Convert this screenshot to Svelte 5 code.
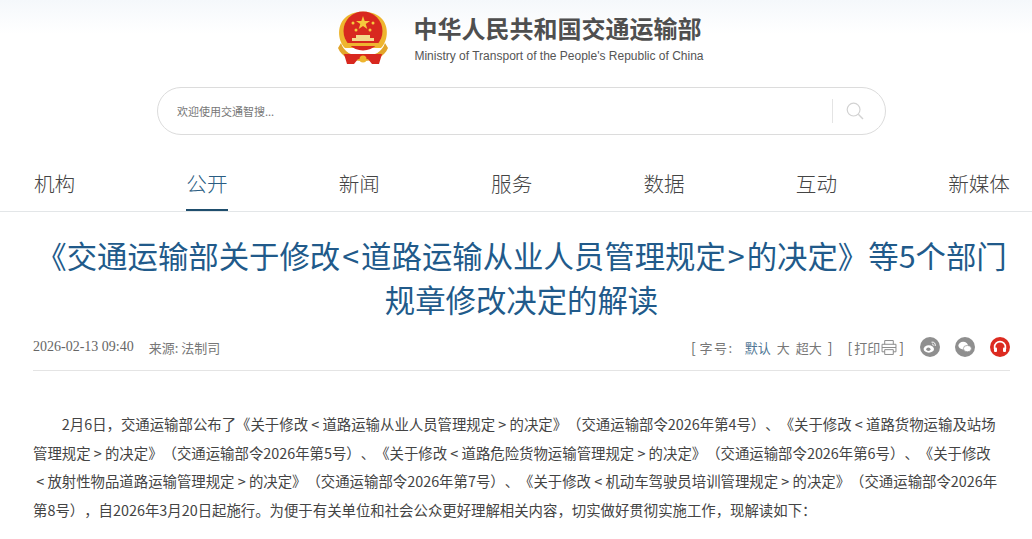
<script>
  const nav = [
    { label: '机构' }, { label: '公开', active: true }, { label: '新闻' }, { label: '服务' },
    { label: '数据' }, { label: '互动' }, { label: '新媒体' }
  ];
</script>

<div class="page">
  <header class="brand">
    <svg class="emblem" viewBox="0 0 54 56" aria-hidden="true">
      <path d="M9 38 C1 30 1 14 10 7 C18 0 36 0 44 7 C53 14 53 30 45 38 Z" fill="#eeb52f"/>
      <circle cx="27" cy="21" r="19.5" fill="#d8281f"/>
      <polygon points="27,6 28.7,11 34,11 29.7,14.1 31.3,19 27,16 22.7,19 24.3,14.1 20,11 25.3,11" fill="#f5c93d"/>
      <circle cx="17" cy="13" r="1.5" fill="#f5c93d"/><circle cx="37" cy="13" r="1.5" fill="#f5c93d"/>
      <circle cx="20" cy="20" r="1.5" fill="#f5c93d"/><circle cx="34" cy="20" r="1.5" fill="#f5c93d"/>
      <path d="M16 31 V28 H20 V25 H34 V28 H38 V31 Z" fill="#f3d98b"/>
      <path d="M12 33 H42 V36 H12 Z" fill="#eeb52f"/>
      <path d="M5 33 C8 42 15 46 27 46 C39 46 46 42 49 33 L52 38 C48 47 40 51 27 51 C14 51 6 47 2 38 Z" fill="#e2a52a"/>
      <path d="M8 44 H46 L43 54 H36 L32 49 H22 L18 54 H11 Z" fill="#d8281f"/>
      <circle cx="27" cy="49" r="3.5" fill="#eeb52f"/>
    </svg>
    <div class="brand-text">
      <div class="cn">中华人民共和国交通运输部</div>
      <div class="en">Ministry of Transport of the People's Republic of China</div>
    </div>
  </header>

  <div class="search">
    <span class="placeholder">欢迎使用交通智搜...</span>
    <span class="divider"></span>
    <svg class="glass" viewBox="0 0 18 18" aria-hidden="true">
      <circle cx="7.6" cy="7.6" r="6.4" fill="none" stroke="#d2d2d2" stroke-width="1.2"/>
      <path d="M12.3 12.3 L17 17" stroke="#d2d2d2" stroke-width="1.4" fill="none"/>
    </svg>
  </div>

  <nav class="nav">
    {#each nav as item}
      <a class="nav-item" class:active={item.active} href="#top">{item.label}</a>
    {/each}
  </nav>

  <main class="article">
    <h1>《交通运输部关于修改<span class="ha">&lt;</span>道路运输从业人员管理规定<span class="ha">&gt;</span>的决定》等5个部门规章修改决定的解读</h1>

    <div class="meta">
      <div class="meta-left">
        <span class="date">2026-02-13 09:40</span>
        <span class="source">来源: 法制司</span>
      </div>
      <div class="meta-right">
        <span class="fontsize"><span class="br start">[</span><span class="label">字号:</span><span class="sizes"><span class="blue">默认</span><span>大</span><span>超大</span></span><span class="br">]</span></span>
        <span class="print"><span class="br">[</span>打印<svg class="printer" viewBox="1 1 14 14" aria-hidden="true">
            <path d="M4 5 V1.5 H12 V5 M4 12 H1.5 V5 H14.5 V12 H12 M4 10 H12 V14.5 H4 Z M1.5 8 H14.5" fill="none" stroke="#888" stroke-width=".9"/>
          </svg><span class="br">]</span></span>
        <span class="shares">
          <svg class="share" viewBox="0 0 20 20" aria-hidden="true">
            <circle cx="10" cy="10" r="10" fill="#8f8f8f"/>
            <ellipse cx="8.8" cy="12" rx="5.2" ry="3.7" fill="#fff"/>
            <ellipse cx="8.4" cy="12.3" rx="2.1" ry="1.7" fill="#8f8f8f"/>
            <path d="M11.5 5.2 C14 4.6 15.8 6.4 15.2 9 M12 7.2 C13 7 13.5 7.6 13.3 8.6" fill="none" stroke="#fff" stroke-width="1"/>
          </svg>
          <svg class="share" viewBox="0 0 20 20" aria-hidden="true">
            <circle cx="10" cy="10" r="10" fill="#8f8f8f"/>
            <ellipse cx="8.2" cy="8.6" rx="4.8" ry="3.8" fill="#fff"/>
            <ellipse cx="12.4" cy="11.6" rx="4" ry="3.2" fill="#fff" stroke="#8f8f8f" stroke-width=".7"/>
          </svg>
          <svg class="share" viewBox="0 0 20 20" aria-hidden="true">
            <circle cx="10" cy="10" r="10" fill="#dc2b20"/>
            <path d="M4.6 12 V10 A5.4 5.4 0 0 1 15.4 10 V12" fill="none" stroke="#fff" stroke-width="1.6"/>
            <rect x="4" y="10.5" width="3" height="4.5" rx="1" fill="#fff"/>
            <rect x="13" y="10.5" width="3" height="4.5" rx="1" fill="#fff"/>
          </svg>
        </span>
      </div>
    </div>

    <p class="body">2月6日，交通运输部公布了《关于修改<span class="fw">&lt;</span>道路运输从业人员管理规定<span class="fw">&gt;</span>的决定》（交通运输部令2026年第4号）、《关于修改<span class="fw">&lt;</span>道路货物运输及站场管理规定<span class="fw">&gt;</span>的决定》（交通运输部令2026年第5号）、《关于修改<span class="fw">&lt;</span>道路危险货物运输管理规定<span class="fw">&gt;</span>的决定》（交通运输部令2026年第6号）、《关于修改<span class="fw">&lt;</span>放射性物品道路运输管理规定<span class="fw">&gt;</span>的决定》（交通运输部令2026年第7号）、《关于修改<span class="fw">&lt;</span>机动车驾驶员培训管理规定<span class="fw">&gt;</span>的决定》（交通运输部令2026年第8号），自2026年3月20日起施行。为便于有关单位和社会公众更好理解相关内容，切实做好贯彻实施工作，现解读如下：</p>
  </main>
</div>

<style>
  :global(body) {
    margin: 0;
    background: #fff;
    font-family: "Noto Sans CJK SC", "Liberation Sans", sans-serif;
  }
  .page {
    height: 539px;
    overflow: hidden;
    background: linear-gradient(#f5f8fb 0, #fff 34px);
  }
  .brand {
    display: flex;
    justify-content: center;
    align-items: center;
    gap: 23px;
    height: 87px;
    padding-left: 8px;
    box-sizing: border-box;
    padding-bottom: 11px;
  }
  .emblem { width: 54px; height: 56px; flex: none; }
  .brand-text { display: flex; flex-direction: column; gap: 4px; }
  .cn {
    font-size: 24px;
    font-weight: 700;
    line-height: 32px;
    color: #4f4f4f;
  }
  .en {
    margin-left: 1px;
    font: 12px/16px "Liberation Sans", sans-serif;
    color: #555;
  }
  .search {
    display: flex;
    align-items: center;
    box-sizing: border-box;
    width: 729px;
    height: 48px;
    margin-left: 157px;
    padding: 0 21px 0 19px;
    border: 1px solid #dcdcdc;
    border-radius: 24px;
    background: #fff;
  }
  .placeholder { flex: 1; font-size: 11px; color: #777; }
  .divider { width: 1px; height: 24px; background: #e4e4e4; margin-right: 13px; }
  .glass { width: 18px; height: 18px; }
  .nav {
    display: flex;
    justify-content: space-between;
    box-sizing: border-box;
    height: 77px;
    padding: 0 22px 0 34px;
    border-bottom: 1px solid #e3e6e8;
  }
  .nav-item {
    box-sizing: border-box;
    height: 76px;
    padding-top: 33px;
    font-size: 20.6px;
    font-weight: 300;
    line-height: 30px;
    color: #444;
    text-decoration: none;
    border-bottom: 2px solid transparent;
  }
  .nav-item.active { color: #2a5c82; border-bottom-color: #1f4e6d; }
  .article { padding: 0 22px 0 33px; }
  h1 {
    margin: 21px 0 0;
    font-size: 30.4px;
    font-weight: 400;
    line-height: 44px;
    text-align: center;
    color: #215a8a;
    text-spacing-trim: space-all;
  }
  .ha { margin: 0 2px; }
  .meta {
    display: flex;
    justify-content: space-between;
    align-items: center;
    height: 45px;
    margin-top: 5px;
    border-bottom: 1px solid #e4e4e4;
    box-sizing: border-box;
    padding-bottom: 2px;
    color: #777;
    font-size: 13px;
  }
  .meta-left { display: flex; gap: 15px; align-items: center; }
  .date { font: 14px "Liberation Serif", serif; color: #666; }
  .source { color: #777; }
  .meta-right { display: flex; align-items: center; font-size: 13px; color: #777; }
  .fontsize { display: flex; align-items: center; }
  .label { letter-spacing: 1.5px; margin-left: 2px; }
  .sizes { display: flex; gap: 6px; margin-left: 11px; margin-right: 6px; }
  .blue { color: #4f7694; }
  .br { font-size: 14px; margin-right: 2px; color: #666; }
  .print { display: flex; align-items: center; margin-left: 13px; }
  .printer { width: 16px; height: 15px; margin: 0 2px 0 1px; }
  .shares { display: flex; gap: 15px; margin-left: 14px; }
  .share { width: 20px; height: 20px; display: block; }
  .body {
    margin: 39px 7px 0 0;
    font-size: 14.4px;
    line-height: 28.7px;
    text-indent: 28.8px;
    color: #444;
    text-spacing-trim: space-all;
  }
  .fw { display: inline-block; width: 1em; text-align: center; text-indent: 0; }
</style>
